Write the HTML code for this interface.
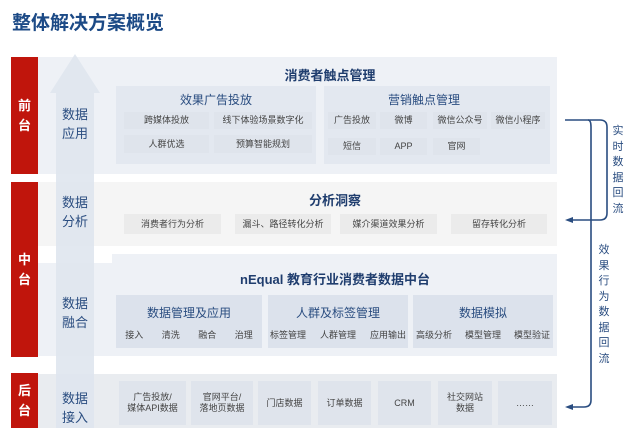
<!DOCTYPE html>
<html><head><meta charset="utf-8"><style>
*{margin:0;padding:0;box-sizing:border-box}
body{width:640px;height:428px;background:#fff;position:relative;overflow:hidden;font-family:"Liberation Sans","Noto Sans CJK SC",sans-serif}
.a{position:absolute}
.red{background:#c0150c;color:#fff;font-weight:bold;font-size:13px;line-height:20px;text-align:center;display:flex;align-items:center;justify-content:center;writing-mode:horizontal-tb}
.chip{position:absolute;background:#dfe4ec;color:#444;font-size:9px;display:flex;align-items:center;justify-content:center;text-align:center;line-height:11px}
.g{background:#ebebeb}
.lbl{position:absolute;color:#2a4d80;font-size:13px;line-height:19px;width:38px;text-align:center}
.t{position:absolute;color:#1f3d6e;font-weight:bold;font-size:13px;text-align:center}
.st{position:absolute;color:#2a4d80;font-size:12px;text-align:center}
.vt{position:absolute;color:#2a4d80;font-size:11px;line-height:15.5px;width:14px;text-align:center}
</style></head><body>
<div class="a" style="left:12px;top:8px;font-size:19px;font-weight:bold;color:#1c4a86">整体解决方案概览</div>

<!-- panels -->
<div class="a" style="left:38px;top:57px;width:519px;height:117px;background:#eef1f6"></div>
<div class="a" style="left:38px;top:182px;width:519px;height:64px;background:#f5f5f5"></div>
<div class="a" style="left:38px;top:263px;width:519px;height:93px;background:#eef1f6"></div>
<div class="a" style="left:112px;top:254px;width:445px;height:102px;background:#eef1f6"></div>
<div class="a" style="left:38px;top:374px;width:519px;height:54px;background:#e9ecf0"></div>

<!-- red bars -->
<div class="a red" style="left:11px;top:57px;width:27px;height:117px">前<br>台</div>
<div class="a red" style="left:11px;top:182px;width:27px;height:175px">中<br>台</div>
<div class="a red" style="left:11px;top:373px;width:27px;height:55px">后<br>台</div>

<!-- big arrow -->
<svg class="a" style="left:50px;top:54px" width="52" height="374"><polygon points="25,0 50,39 44,39 44,374 6,374 6,39 0,39" fill="#dfe5ee" opacity="0.9"/></svg>
<div class="lbl" style="left:56px;top:105px">数据<br>应用</div>
<div class="lbl" style="left:56px;top:193px">数据<br>分析</div>
<div class="lbl" style="left:56px;top:294px">数据<br>融合</div>
<div class="lbl" style="left:56px;top:389px">数据<br>接入</div>

<!-- front -->
<div class="t" style="left:230px;top:65px;width:200px">消费者触点管理</div>
<div class="a" style="left:116px;top:86px;width:200px;height:78px;background:#e3e8f0"></div>
<div class="st" style="left:116px;top:91px;width:200px">效果广告投放</div>
<div class="chip" style="left:124px;top:112px;width:85px;height:17px">跨媒体投放</div>
<div class="chip" style="left:214px;top:112px;width:98px;height:17px">线下体验场景数字化</div>
<div class="chip" style="left:124px;top:135px;width:85px;height:18px">人群优选</div>
<div class="chip" style="left:214px;top:135px;width:98px;height:18px">预算智能规划</div>
<div class="a" style="left:324px;top:86px;width:226px;height:78px;background:#e3e8f0"></div>
<div class="st" style="left:324px;top:91px;width:200px">营销触点管理</div>
<div class="chip" style="left:328px;top:112px;width:48px;height:17px">广告投放</div>
<div class="chip" style="left:380px;top:112px;width:47px;height:17px">微博</div>
<div class="chip" style="left:433px;top:112px;width:54px;height:17px">微信公众号</div>
<div class="chip" style="left:491px;top:112px;width:54px;height:17px">微信小程序</div>
<div class="chip" style="left:328px;top:138px;width:48px;height:17px">短信</div>
<div class="chip" style="left:380px;top:138px;width:47px;height:17px">APP</div>
<div class="chip" style="left:433px;top:138px;width:47px;height:17px">官网</div>

<!-- analysis -->
<div class="t" style="left:235px;top:190px;width:200px">分析洞察</div>
<div class="chip g" style="left:124px;top:214px;width:97px;height:20px">消费者行为分析</div>
<div class="chip g" style="left:235px;top:214px;width:96px;height:20px">漏斗、路径转化分析</div>
<div class="chip g" style="left:340px;top:214px;width:97px;height:20px">媒介渠道效果分析</div>
<div class="chip g" style="left:451px;top:214px;width:96px;height:20px">留存转化分析</div>

<!-- fusion -->
<div class="t" style="left:200px;top:269px;width:270px">nEqual 教育行业消费者数据中台</div>
<div class="a" style="left:116px;top:295px;width:146px;height:53px;background:#dce2ec"></div>
<div class="a" style="left:268px;top:295px;width:140px;height:53px;background:#dce2ec"></div>
<div class="a" style="left:413px;top:295px;width:140px;height:53px;background:#dce2ec"></div>
<div class="st" style="left:116px;top:304px;width:146px">数据管理及应用</div>
<div class="st" style="left:268px;top:304px;width:140px">人群及标签管理</div>
<div class="st" style="left:413px;top:304px;width:140px">数据模拟</div>
<div class="a" style="left:116px;top:328px;width:146px;font-size:9px;color:#444;display:flex;justify-content:space-around">
<span>接入</span><span>清洗</span><span>融合</span><span>治理</span></div>
<div class="a" style="left:270px;top:328px;width:136px;font-size:9px;color:#444;display:flex;justify-content:space-between">
<span>标签管理</span><span>人群管理</span><span>应用输出</span></div>
<div class="a" style="left:416px;top:328px;width:134px;font-size:9px;color:#444;display:flex;justify-content:space-between">
<span>高级分析</span><span>模型管理</span><span>模型验证</span></div>

<!-- back -->
<div class="chip" style="left:119px;top:381px;width:67px;height:44px">广告投放/<br>媒体API数据</div>
<div class="chip" style="left:191px;top:381px;width:62px;height:44px">官网平台/<br>落地页数据</div>
<div class="chip" style="left:258px;top:381px;width:53px;height:44px">门店数据</div>
<div class="chip" style="left:318px;top:381px;width:53px;height:44px">订单数据</div>
<div class="chip" style="left:378px;top:381px;width:53px;height:44px">CRM</div>
<div class="chip" style="left:438px;top:381px;width:54px;height:44px">社交网站<br>数据</div>
<div class="chip" style="left:498px;top:381px;width:54px;height:44px">……</div>

<!-- right arrows -->
<svg class="a" style="left:560px;top:110px" width="60" height="310" fill="none" stroke="#2a4d80" stroke-width="1.6">
<path d="M5,10 H40 Q47,10 47,17 V103 Q47,110 40,110 H10"/>
<polygon points="5,110 13,107 13,113" fill="#2a4d80" stroke="none"/>
<path d="M28,10 Q31,10 31,17 V290 Q31,297 24,297 H10"/>
<polygon points="5,297 13,294 13,300" fill="#2a4d80" stroke="none"/>
</svg>
<div class="vt" style="left:611px;top:124px">实<br>时<br>数<br>据<br>回<br>流</div>
<div class="vt" style="left:597px;top:243px">效<br>果<br>行<br>为<br>数<br>据<br>回<br>流</div>
</body></html>
